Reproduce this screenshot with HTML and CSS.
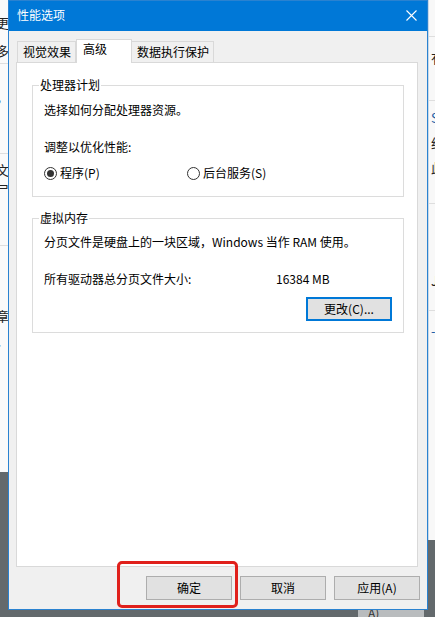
FILE: index.html
```html
<!doctype html>
<html>
    <head>
        <meta charset="utf-8">
        <title>性能选项</title>
        <meta name="viewport" content="width=device-width, initial-scale=1">
        <link rel="stylesheet" href="styles.css">
    </head>
    <body>
        <!-- windows lying behind the dialog -->
        <div class="back-window left-window">
            <div class="back-row row-a">
                <p>更作</p>
                <p>多彩</p>
            </div>
            <div class="back-row row-b">
                <p>，</p>
            </div>
            <div class="back-row row-c">
                <p>文</p>
                <p>尸</p>
            </div>
            <div class="back-row row-d">
                <p>章</p>
                <p>、</p>
            </div>
        </div>
        <div class="back-window right-window">
            <div class="back-row row-e"></div>
            <div class="back-row row-f">
                <p>有</p>
            </div>
            <div class="back-row row-g">
                <p class="blue">S</p>
                <p>约</p>
                <p>此</p>
            </div>
            <div class="back-row row-h">
                <p>JF</p>
            </div>
            <div class="back-row row-i">
                <p class="blue">-司</p>
            </div>
        </div>
        <div class="back-window bottom-window">A)</div>

        <div class="dialog">
            <div class="title-bar">
                <span class="title">性能选项</span>
                <svg class="close" width="11" height="11" viewBox="0 0 11 11">
                    <path d="M0.5 0.5 L10.5 10.5 M10.5 0.5 L0.5 10.5" stroke="#fff" stroke-width="1.1" fill="none"/>
                </svg>
            </div>
            <div class="content">
                <div class="tabs">
                    <div class="tab">视觉效果</div>
                    <div class="tab active">高级</div>
                    <div class="tab">数据执行保护</div>
                </div>
                <div class="panel">
                    <fieldset class="group group-cpu">
                        <legend>处理器计划</legend>
                        <p>选择如何分配处理器资源。</p>
                        <p class="spaced">调整以优化性能:</p>
                        <div class="radio-row">
                            <label class="radio checked"><span class="dot"></span>程序(P)</label>
                            <label class="radio"><span class="dot"></span>后台服务(S)</label>
                        </div>
                    </fieldset>
                    <fieldset class="group group-memory">
                        <legend>虚拟内存</legend>
                        <p>分页文件是硬盘上的一块区域，Windows 当作 RAM 使用。</p>
                        <div class="size-row">
                            <span class="size-label">所有驱动器总分页文件大小:</span>
                            <span>16384 MB</span>
                        </div>
                        <div class="change-row">
                            <button class="btn focused">更改(C)...</button>
                        </div>
                    </fieldset>
                </div>
            </div>
            <div class="footer">
                <button class="btn">确定</button>
                <button class="btn">取消</button>
                <button class="btn">应用(A)</button>
            </div>
            <div class="highlight"></div>
        </div>
    </body>
</html>
```

FILE: styles.css
```css
* {
    box-sizing: border-box;
}
html,
body {
    margin: 0;
    height: 100%;
}
body {
    position: relative;
    overflow: hidden;
    background: #63696c;
    font-family: "Noto Sans CJK SC", "Microsoft YaHei", sans-serif;
    font-size: 12px;
    line-height: 16px;
    color: #000;
}
p {
    margin: 0;
}

/* background windows */
.back-window {
    position: absolute;
    overflow: hidden;
}
.left-window {
    left: 0;
    top: 0;
    width: 60px;
    height: 472px;
    background: #fafafa;
}
.left-window p {
    margin-left: -4px;
    font-size: 13px;
    color: #222;
}
.back-row {
    border-bottom: 1px solid #dedede;
}
.row-a {
    height: 64px;
    padding-top: 15px;
}
.row-a p + p {
    margin-top: 12px;
}
.row-b {
    height: 90px;
    padding-top: 25px;
}
.row-c {
    height: 92px;
    padding-top: 8px;
}
.row-c p + p {
    margin-top: 4px;
}
.row-d {
    height: 190px;
    padding-top: 62px;
    border-bottom: 0;
}
.row-d p + p {
    margin-top: 8px;
}
.right-window {
    left: 428px;
    top: 0;
    width: 40px;
    height: 540px;
    background: #f8f8f8;
    border-left: 1px solid #c9d9e8;
}
.right-window p {
    margin-left: 2px;
    font-size: 13px;
    color: #222;
}
.right-window .blue {
    color: #1b5fa6;
}
.row-e {
    height: 37px;
}
.row-f {
    height: 64px;
    padding-top: 13px;
}
.row-g {
    height: 103px;
    padding-top: 9px;
}
.row-g p + p {
    margin-top: 9px;
}
.row-h {
    height: 107px;
    padding-top: 69px;
}
.row-i {
    height: 229px;
    padding-top: 12px;
    border-bottom: 0;
}
.bottom-window {
    left: 358px;
    top: 600px;
    width: 66px;
    height: 20px;
    padding: 5px 0 0 10px;
    background: #b9bcbe;
    color: #333;
}

/* dialog */
.dialog {
    position: absolute;
    left: 8px;
    top: 0;
    width: 420px;
    height: 610px;
    display: flex;
    flex-direction: column;
    background: #f0f0f0;
    border: 1px solid #2a82d0;
}
.title-bar {
    height: 30px;
    flex: none;
    display: flex;
    align-items: center;
    justify-content: space-between;
    padding: 0 10px 2px 8px;
    background: #0078d7;
    color: #fff;
}
.close {
    display: block;
}
.content {
    flex: 1;
    display: flex;
    flex-direction: column;
    padding: 8px 9px 0 7px;
}
.tabs {
    display: flex;
    align-items: flex-end;
    height: 23px;
    padding-left: 1px;
}
.tab {
    height: 21px;
    padding: 2px 4px 0 5px;
    border: 1px solid #d9d9d9;
    border-bottom: 0;
    background: #f0f0f0;
    white-space: nowrap;
}
.tab + .tab {
    border-left: 0;
}
.tab.active {
    position: relative;
    z-index: 1;
    height: 24px;
    margin-bottom: -1px;
    min-width: 56px;
    padding: 1px 6px 0 6px;
    background: #fff;
    border-left: 1px solid #d9d9d9;
}
.tab.active + .tab {
    border-left: 0;
}
.panel {
    flex: 1;
    padding: 14px 13px 0 15px;
    background: #fff;
    border: 1px solid #d9d9d9;
}
.group {
    margin: 0;
    padding: 9px 11px 15px 11px;
    border: 1px solid #dcdcdc;
    min-width: 0;
}
.group legend {
    margin-left: -5px;
    padding: 0 1px;
}
.group-memory {
    margin-top: 13px;
    padding-top: 8px;
    padding-bottom: 11px;
}
.spaced {
    margin-top: 21px;
}
.radio-row {
    display: flex;
    margin-top: 10px;
}
.radio {
    display: flex;
    align-items: center;
    width: 143px;
}
.dot {
    position: relative;
    width: 13px;
    height: 13px;
    margin-right: 3px;
    border: 1px solid #333;
    border-radius: 50%;
    background: #fff;
}
.radio.checked .dot::after {
    content: "";
    position: absolute;
    left: 2px;
    top: 2px;
    width: 7px;
    height: 7px;
    border-radius: 50%;
    background: #333;
}
.size-row {
    display: flex;
    margin-top: 21px;
}
.size-label {
    width: 232px;
}
.change-row {
    display: flex;
    justify-content: flex-end;
    margin-top: 10px;
}
.btn {
    width: 86px;
    height: 24px;
    padding: 0;
    font: inherit;
    color: #000;
    background: #e1e1e1;
    border: 1px solid #adadad;
}
.btn.focused {
    border: 2px solid #0078d7;
}
.footer {
    flex: none;
    display: flex;
    justify-content: flex-end;
    gap: 8px;
    padding: 9px 7px 9px 0;
}

/* red annotation frame */
.highlight {
    position: absolute;
    left: 108px;
    top: 560px;
    width: 121px;
    height: 47px;
    border: 3px solid #e0201b;
    border-radius: 5px;
}
```
